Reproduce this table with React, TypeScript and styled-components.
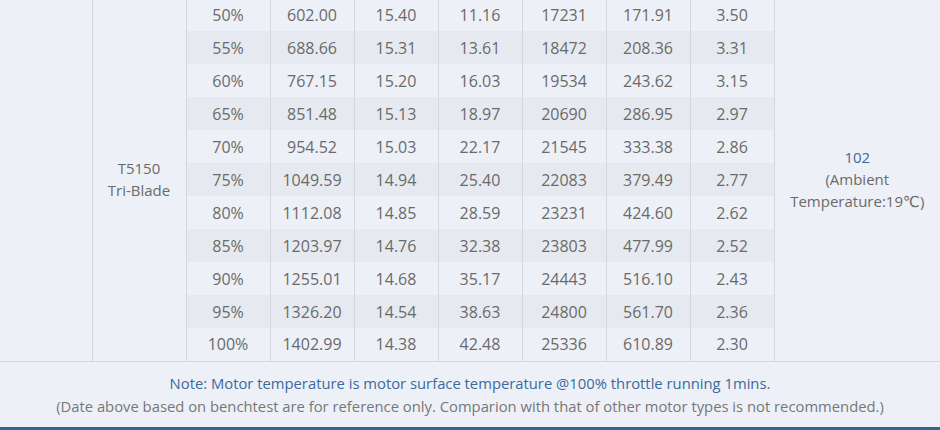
import React from 'react';
import styled, { createGlobalStyle } from 'styled-components';

const rows = [
  ['50%', '602.00', '15.40', '11.16', '17231', '171.91', '3.50'],
  ['55%', '688.66', '15.31', '13.61', '18472', '208.36', '3.31'],
  ['60%', '767.15', '15.20', '16.03', '19534', '243.62', '3.15'],
  ['65%', '851.48', '15.13', '18.97', '20690', '286.95', '2.97'],
  ['70%', '954.52', '15.03', '22.17', '21545', '333.38', '2.86'],
  ['75%', '1049.59', '14.94', '25.40', '22083', '379.49', '2.77'],
  ['80%', '1112.08', '14.85', '28.59', '23231', '424.60', '2.62'],
  ['85%', '1203.97', '14.76', '32.38', '23803', '477.99', '2.52'],
  ['90%', '1255.01', '14.68', '35.17', '24443', '516.10', '2.43'],
  ['95%', '1326.20', '14.54', '38.63', '24800', '561.70', '2.36'],
  ['100%', '1402.99', '14.38', '42.48', '25336', '610.89', '2.30'],
];

const GlobalStyle = createGlobalStyle`
  html, body {
    margin: 0;
    padding: 0;
    background: #edf1f7;
  }
  body {
    font-family: "Open Sans", "Liberation Sans", sans-serif;
  }
`;

const Page = styled.div`
  width: 940px;
  height: 430px;
  box-sizing: border-box;
  overflow: hidden;
  background: #edf1f7;
  border-bottom: 3px solid #3a6391;
`;

const Table = styled.table`
  width: 940px;
  margin-top: -2px;
  table-layout: fixed;
  border-collapse: collapse;
  border-bottom: 1px solid #d3d8df;
  color: #6a6a6a;
  font-size: 16px;
`;

const Row = styled.tr<{ $striped: boolean }>`
  height: 33px;
  background: ${(p) => (p.$striped ? '#e6eaf0' : 'transparent')};
`;

const Cell = styled.td`
  padding: 0;
  text-align: center;
  vertical-align: middle;
  border-left: 1px solid #d3d8df;
  border-right: 1px solid #d3d8df;
  line-height: 22px;
  white-space: nowrap;
`;

const SpanCell = styled(Cell)<{ $edge?: 'left' | 'right' }>`
  background: #edf1f7;
  font-size: 15px;
  white-space: normal;
  border-left: ${(p) => (p.$edge === 'left' ? 'none' : '1px solid #d3d8df')};
  border-right: ${(p) => (p.$edge === 'right' ? 'none' : '1px solid #d3d8df')};
  border-bottom: 1px solid #d3d8df;
`;

const Highlight = styled.span`
  color: #3b6a9c;
`;

const Unit = styled.span`
  font-family: "Liberation Sans", "DejaVu Sans", sans-serif;
`;

const Note = styled.div`
  padding-top: 10px;
  text-align: center;
  font-size: 14.8px;
  line-height: 23px;
  color: #777;
`;

const NoteLead = styled.div`
  color: #3b6a9c;
`;

export default function App() {
  return (
    <Page>
      <GlobalStyle />
      <Table>
        <colgroup>
          <col style={{ width: 92 }} />
          <col style={{ width: 94 }} />
          {rows[0].map((_, i) => (
            <col key={i} style={{ width: 84 }} />
          ))}
          <col />
        </colgroup>
        <tbody>
          {rows.map((r, i) => (
            <Row key={r[0]} $striped={i % 2 === 1}>
              {i === 0 && (
                <>
                  <SpanCell rowSpan={rows.length} $edge="left" />
                  <SpanCell rowSpan={rows.length}>
                    T5150
                    <br />
                    Tri-Blade
                  </SpanCell>
                </>
              )}
              {r.map((v, j) => (
                <Cell key={j}>{v}</Cell>
              ))}
              {i === 0 && (
                <SpanCell rowSpan={rows.length} $edge="right">
                  <Highlight>102</Highlight>
                  <br />
                  (Ambient
                  <br />
                  Temperature:19<Unit>℃</Unit>)
                </SpanCell>
              )}
            </Row>
          ))}
        </tbody>
      </Table>
      <Note>
        <NoteLead>Note: Motor temperature is motor surface temperature @100% throttle running 1mins.</NoteLead>
        (Date above based on benchtest are for reference only. Comparion with that of other motor types is not recommended.)
      </Note>
    </Page>
  );
}
